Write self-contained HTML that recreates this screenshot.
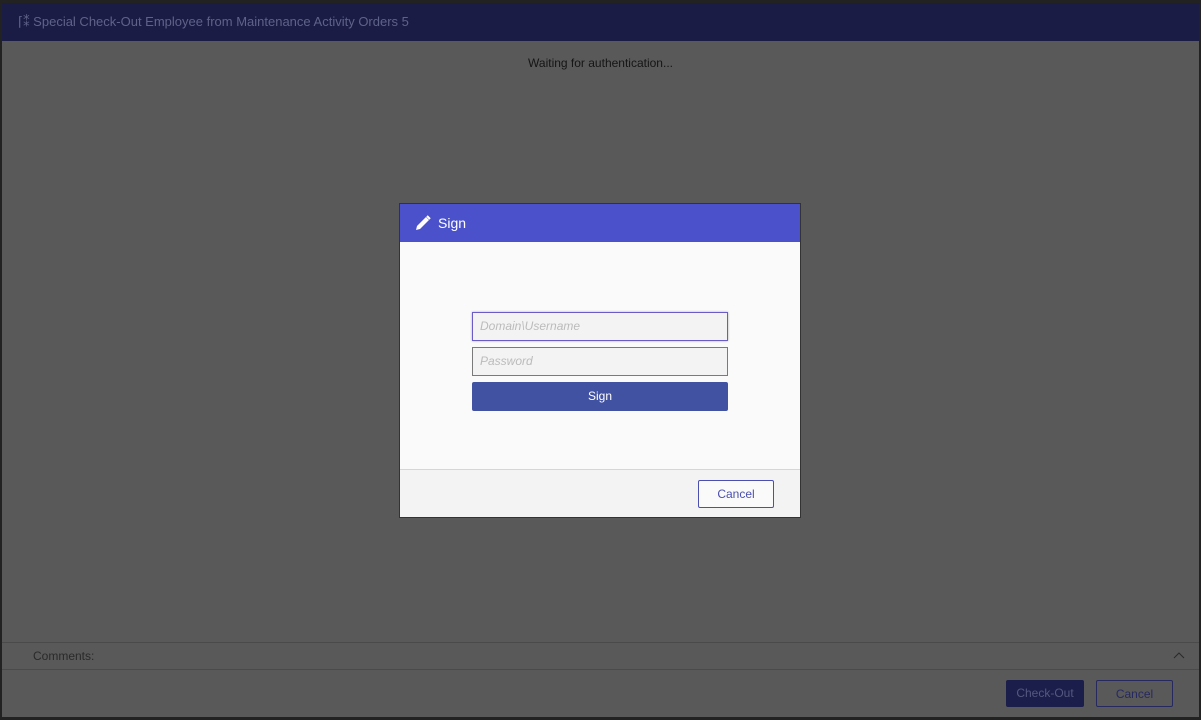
<html><head><style>
body{margin:0;width:1201px;height:720px;background:#222;font-family:"Liberation Sans",sans-serif;position:relative;overflow:hidden}
.win{position:absolute;left:2px;top:3px;width:1197px;height:714px;background:#595959}
.tb{position:absolute;left:0;top:0;right:0;height:38px;background:#1a1c46;color:#5f6288;font-size:13px;line-height:38px;padding-left:16px}
.wait{position:absolute;top:53px;left:0;right:0;text-align:center;font-size:12px;color:#151515}
.com{position:absolute;left:0;right:0;top:639px;height:26px;border-top:1px solid #4a4a4a;border-bottom:1px solid #4a4a4a;font-size:12px;color:#2a2a2a;line-height:26px;padding-left:31px}
.btn{position:absolute;height:27px;font-size:12px;line-height:27px;text-align:center;border-radius:2px;box-sizing:border-box}
.dlg{position:absolute;left:399px;top:203px;width:402px;height:315px;background:#fafafa;border:1px solid #333;box-sizing:border-box}
.dh{height:38px;background:#4a51cb;color:#fff;font-size:14px;line-height:38px;padding-left:38px;position:relative}
.in{position:absolute;left:72px;width:256px;height:29px;box-sizing:border-box;background:#f3f3f3;border:1px solid #7a7a7a;font-size:12px;font-style:italic;color:#bbb;line-height:27px;padding-left:7px}
.df{position:absolute;left:0;right:0;top:265px;bottom:0;background:#f3f3f3;border-top:1px solid #d6d6d6}
</style></head><body>
<div class="win">
<div class="tb">⌈⁑ Special Check-Out Employee from Maintenance Activity Orders 5</div>
<div class="wait">Waiting for authentication...</div>
<div class="com">Comments:<svg style="position:absolute;right:14px;top:9px" width="12" height="7" viewBox="0 0 12 7"><path d="M1 6 L6 1 L11 6" stroke="#2a2a2a" fill="none"/></svg></div>
<div class="btn" style="left:1004px;top:677px;width:78px;background:#1b1d4a;color:#55587f">Check-Out</div>
<div class="btn" style="left:1094px;top:677px;width:77px;border:1px solid #262960;color:#262960">Cancel</div>
</div>
<div class="dlg">
<div class="dh"><svg style="position:absolute;left:15px;top:11px" width="16" height="16" viewBox="0 0 16 16"><path d="M1 15 L2 11 L11 2 L14 5 L5 14 Z" fill="#fff"/><path d="M12 1 L15 4" stroke="#fff" stroke-width="2"/></svg>Sign</div>
<div class="in" style="top:108px;border:1px solid #6a5cc8;box-shadow:0 0 2px #aaa">Domain\Username</div>
<div class="in" style="top:143px">Password</div>
<div class="btn" style="left:72px;top:178px;width:256px;height:29px;line-height:29px;background:#4252a3;color:#fff">Sign</div>
<div class="df"><div class="btn" style="left:298px;top:10px;width:76px;height:28px;border:1px solid #4a4fb0;color:#4a4fb0;background:#fafafa">Cancel</div></div>
</div>
</body></html>
